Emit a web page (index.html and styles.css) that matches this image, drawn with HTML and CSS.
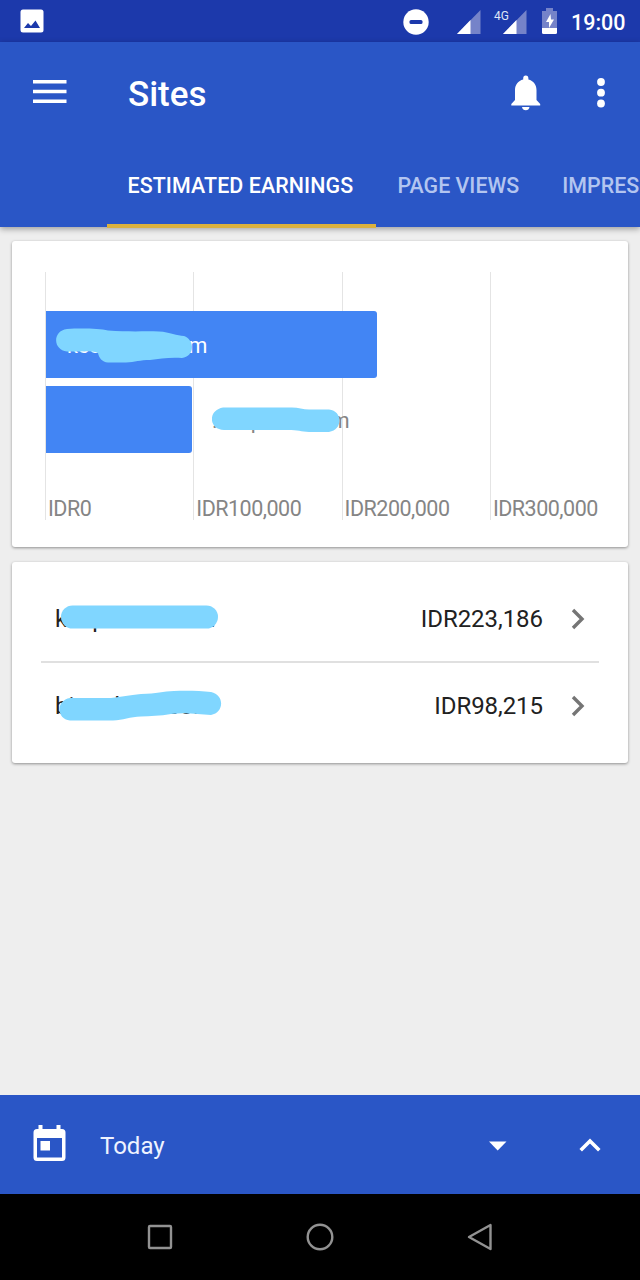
FILE: index.html
```html
<!DOCTYPE html>
<html lang="en">

<head>
  <meta charset="UTF-8">
  <meta name="viewport" content="width=device-width, initial-scale=1.0">
  <title>Sites</title>
  <link rel="stylesheet" href="styles.css">
</head>

<body>
  <div class="screen">
    <div class="status">
      <svg class="photo" width="24" height="24" viewBox="0 0 24 24">
        <rect x="0.5" y="0.5" width="23" height="23" rx="2.5" fill="#fff" />
        <path d="M4 19l4-5 3 3 4.500-5.500L20 19z" fill="#1c39ab" />
      </svg>
      <div class="status-right">
        <svg class="dnd" width="26" height="26" viewBox="0 0 26 26">
          <circle cx="13" cy="13" r="12.700" fill="#fff" />
          <rect x="6.500" y="11" width="13" height="4" rx="1.500" fill="#1c39ab" />
        </svg>
        <svg class="signal" width="24" height="24" viewBox="0 0 24 24">
          <path d="M23.500 0v24H0z" fill="#7583c9" />
          <path d="M13.500 10v14H0z" fill="#fff" />
        </svg>
        <div class="mobile">
          <span class="net">4G</span>
          <svg width="24" height="24" viewBox="0 0 24 24">
            <path d="M23.500 0v24H0z" fill="#7583c9" />
            <path d="M13.500 10v14H0z" fill="#fff" />
          </svg>
        </div>
        <svg class="battery" width="16" height="26" viewBox="0 0 16 26">
          <path d="M4 0h7v3h4v17H0V3h4z" fill="#7583c9" />
          <path d="M0 20h15v4.500q0 1.500-1.500 1.500h-12Q0 26 0 24.500z" fill="#fff" />
          <path d="M8.500 6L4 14h3v6l5-8.500H9z" fill="#fff" />
        </svg>
        <span class="clock">19:00</span>
      </div>
    </div>

    <header>
      <div class="toolbar">
        <svg class="menu" width="34" height="24" viewBox="0 0 34 24">
          <path d="M0 1.800h33.500M0 11.500h33.500M0 21.300h33.500" stroke="#fff" stroke-width="3.600" />
        </svg>
        <h1>Sites</h1>
        <svg class="bell" width="30" height="36" viewBox="0 0 30 36">
          <path d="M14.800 0.500c1.800 0 2.600 1.200 2.600 3v1c5 1.200 8.100 5.300 8.100 10.500v10l3.700 4v1.500H0.300V29L4 25V15c0-5.200 3.200-9.300 8.200-10.500v-1c0-1.800.8-3 2.600-3z" fill="#fff" />
          <path d="M11 32h7.500q-.6 3.200-3.700 3.200T11 32z" fill="#fff" />
        </svg>
        <svg class="more" width="8" height="30" viewBox="0 0 8 30">
          <circle cx="4" cy="4" r="3.900" fill="#fff" />
          <circle cx="4" cy="14.700" r="3.900" fill="#fff" />
          <circle cx="4" cy="25.500" r="3.900" fill="#fff" />
        </svg>
      </div>
      <nav class="tabs">
        <span class="tab active">ESTIMATED EARNINGS</span>
        <span class="tab">PAGE VIEWS</span>
        <span class="tab last">IMPRES</span>
      </nav>
    </header>

    <main>
      <section class="card chart">
        <div class="axis">
          <span>IDR0</span>
          <span>IDR100,000</span>
          <span>IDR200,000</span>
          <span>IDR300,000</span>
        </div>
        <div class="bars">
          <div class="line">
            <div class="bar" style="width: 331px"></div>
            <div class="name inside">
              <span>kee</span><span>m</span>
              <svg class="mark" width="138" height="36" viewBox="0 0 138 36">
                <path d="M11 1C25 0 43 .5 52 2.500C72 4 88 3 103 3.500C114 4 121 8 128 8C133 10 136 14 136 19C136 25 132 29 126 30C113 29 104 31 94 32C84 32 79 34 70 34.500H52C46 34 43 30 42 25C34 22 23 24 11 23.500C-3 22-4 3 11 1z" fill="#80d6ff" />
              </svg>
            </div>
          </div>
          <div class="line">
            <div class="bar" style="width: 146px"></div>
            <div class="name outside">
              <span>.</span><span>p</span><span>m</span>
              <svg class="mark" width="130" height="26" viewBox="0 0 130 26">
                <path d="M11 .5H80C87 .5 92 3 99 2.500H117C131 4 131 23 117 25H97C89 24.500 86 23 76 23H12C-4 22-4 3 11 .5z" fill="#80d6ff" />
              </svg>
            </div>
          </div>
        </div>
      </section>

      <section class="card list">
        <div class="row">
          <div class="site">
            <span>k</span><span>p</span><span>.</span>
            <svg class="mark" width="158" height="24" viewBox="0 0 158 24">
              <rect x="0" y="0.500" width="157" height="23" rx="11.500" fill="#80d6ff" />
            </svg>
          </div>
          <span class="amount">IDR223,186</span>
          <svg class="next" width="14" height="22" viewBox="0 0 14 22">
            <path d="M2 2l9 9-9 9" fill="none" stroke="#757575" stroke-width="3.400" />
          </svg>
        </div>
        <div class="row second">
          <div class="site">
            <span>bi</span><span>l</span><span>com</span>
            <svg class="mark" width="164" height="32" viewBox="0 0 164 32">
              <path d="M11 8H52C63 7 70 5 82 4C98 4 104 1 115 1C129 .5 142 1 152 2C166 5 165 23 152 25C139 24 126 22 112 24C101 26 91 26 82 26.500C71 27 64 30 54 30.500H11C-3 29-3 10 11 8z" fill="#80d6ff" />
            </svg>
          </div>
          <span class="amount">IDR98,215</span>
          <svg class="next" width="14" height="22" viewBox="0 0 14 22">
            <path d="M2 2l9 9-9 9" fill="none" stroke="#757575" stroke-width="3.400" />
          </svg>
        </div>
      </section>
    </main>

    <footer>
      <svg class="calendar" width="33" height="36" viewBox="0 0 33 36">
        <path fill-rule="evenodd" d="M5.500 0h4v4h14V0h4v4h1.500q3.500 0 3.500 3.500v25Q32.500 36 29 36H4Q.5 36 .5 32.500v-25Q.5 4 4 4h1.500zM4 13v19.500h25V13z" fill="#fff" />
        <rect x="7.500" y="16" width="9.500" height="9.500" fill="#fff" />
      </svg>
      <span class="range">Today</span>
      <svg class="down" width="18" height="10" viewBox="0 0 18 10">
        <path d="M0 .5h17.500L8.700 9.500z" fill="#fff" />
      </svg>
      <svg class="up" width="22" height="14" viewBox="0 0 22 14">
        <path d="M1.700 12.300L11 3l9.300 9.300" fill="none" stroke="#fff" stroke-width="3.600" />
      </svg>
    </footer>

    <div class="keys">
      <svg width="28" height="28" viewBox="0 0 28 28">
        <rect x="3" y="3" width="22" height="22" rx="1" />
      </svg>
      <svg width="28" height="28" viewBox="0 0 28 28">
        <circle cx="14" cy="14" r="12.300" />
      </svg>
      <svg width="28" height="28" viewBox="0 0 28 28">
        <path d="M24.500 2v24L3 14z" stroke-linejoin="round" />
      </svg>
    </div>
  </div>
</body>

</html>
```

FILE: styles.css
```css
* {
  margin: 0;
  padding: 0;
  box-sizing: border-box;
}

body {
  font-family: Roboto, "Liberation Sans", sans-serif;
  background-color: #eee;
}

svg {
  display: block;
  flex: none;
}

.screen {
  display: flex;
  flex-direction: column;
  width: 640px;
  height: 1280px;
  overflow: hidden;
}

/* status bar */
.status {
  display: flex;
  justify-content: space-between;
  height: 42px;
  padding: 9px 14px 0 20px;
  color: #fff;
  background-color: #1c39ab;
}

.status-right {
  display: flex;
  align-items: flex-start;
}

.signal {
  margin: 1px 0 0 28px;
}

.mobile {
  position: relative;
  margin: 1px 0 0 22px;
}

.net {
  position: absolute;
  left: -9px;
  top: 0;
  font-size: 12px;
  line-height: 12px;
  color: #dfe4f6;
}

.battery {
  margin: -1px 0 0 15px;
}

.clock {
  width: 55px;
  margin: 1px 0 0 13px;
  font-size: 21.5px;
  line-height: 26px;
  font-weight: 500;
  white-space: nowrap;
}

/* app bar */
header {
  position: relative;
  height: 185px;
  color: #fff;
  background-color: #2a56c6;
  box-shadow: 0 2px 6px rgba(0, 0, 0, 0.35);
}

.toolbar {
  display: flex;
  align-items: center;
  height: 101px;
  padding: 0 35px 0 33px;
}

.menu {
  margin-bottom: 2px;
}

h1 {
  flex: 1;
  margin: 5px 0 0 61px;
  font-size: 35px;
  line-height: 42px;
  font-weight: 500;
}

.bell {
  margin-right: 56px;
}

.tabs {
  display: flex;
  height: 85px;
  padding-left: 107px;
}

.tab {
  flex: none;
  padding: 30px 21.5px 0;
  font-size: 21.4px;
  line-height: 26px;
  font-weight: 500;
  color: #b3c5f0;
}

.tab.active {
  width: 269px;
  padding-left: 20.5px;
  letter-spacing: 0.1px;
  color: #fff;
  border-bottom: 4px solid #dbb13e;
}

.tab.last {
  padding-right: 0;
}

/* cards */
main {
  flex: 1;
  padding: 14px 12px;
}

.card {
  background-color: #fff;
  border-radius: 3px;
  box-shadow: 0 1px 3px rgba(0, 0, 0, 0.4);
}

.chart {
  display: grid;
  height: 306px;
  padding: 31px 0 27px 33px;
}

.axis,
.bars {
  grid-area: 1 / 1;
}

.axis {
  display: flex;
}

.axis span {
  display: flex;
  align-items: flex-end;
  width: 148.3px;
  flex: none;
  padding-left: 2px;
  border-left: 1px solid #e4e4e4;
  font-size: 21.5px;
  line-height: 23px;
  letter-spacing: -0.5px;
  color: #858585;
}

.axis span:last-child {
  width: 120px;
}

.bars {
  display: flex;
  flex-direction: column;
  gap: 8px;
  padding: 39px 0 0 1px;
}

.line {
  display: flex;
  position: relative;
  height: 67px;
}

.bar {
  height: 67px;
  background-color: #4285f4;
  border-radius: 0 3px 3px 0;
}

.name {
  display: flex;
  font-size: 21.5px;
  line-height: 26px;
}

.inside {
  position: absolute;
  left: 21px;
  top: 22px;
  color: #fff;
}

.inside span:nth-child(2) {
  margin-left: 88px;
}

.inside .mark {
  position: absolute;
  left: -11px;
  top: -5px;
}

.outside {
  position: relative;
  margin: 22px 0 0 20px;
  color: #858585;
}

.outside span:nth-child(2) {
  margin-left: 33px;
}

.outside span:nth-child(3) {
  margin-left: 68px;
}

.outside .mark {
  position: absolute;
  left: 0;
  top: -1px;
}

.list {
  height: 201px;
  margin-top: 15px;
  padding: 14px 29px 0 29px;
}

.row {
  display: flex;
  align-items: center;
  height: 87px;
  padding: 0 14px 0 14px;
  border-bottom: 2px solid #e0e0e0;
  font-size: 24px;
  line-height: 28px;
  letter-spacing: -0.05px;
  color: #212121;
}

.second {
  height: 86px;
  border-bottom: 0;
}

.site {
  display: flex;
  flex: 1;
  position: relative;
}

.site span:nth-child(2) {
  margin-left: 25px;
}

.site span:nth-child(3) {
  margin-left: 104px;
}

.site .mark {
  position: absolute;
  left: 6px;
  top: 0;
}

.second .site span:nth-child(2) {
  margin-left: 40px;
}

.second .site span:nth-child(3) {
  margin-left: 47px;
}

.second .site .mark {
  left: 4px;
  top: -2px;
}

.next {
  margin-left: 28px;
}

/* date range bar */
footer {
  display: flex;
  align-items: center;
  height: 99px;
  padding: 0 39px 0 33px;
  background-color: #2a56c6;
}

.calendar {
  margin-bottom: 3px;
}

.range {
  flex: 1;
  margin: 2px 0 0 34px;
  font-size: 24px;
  line-height: 28px;
  color: #eef3ff;
}

.down {
  margin-top: 2px;
}

.up {
  margin: 0 0 0 72px;
}

/* navigation keys */
.keys {
  display: flex;
  justify-content: center;
  align-items: center;
  gap: 132px;
  height: 86px;
  background-color: #000;
}

.keys svg {
  fill: none;
  stroke: #929292;
  stroke-width: 2.4;
}
```
